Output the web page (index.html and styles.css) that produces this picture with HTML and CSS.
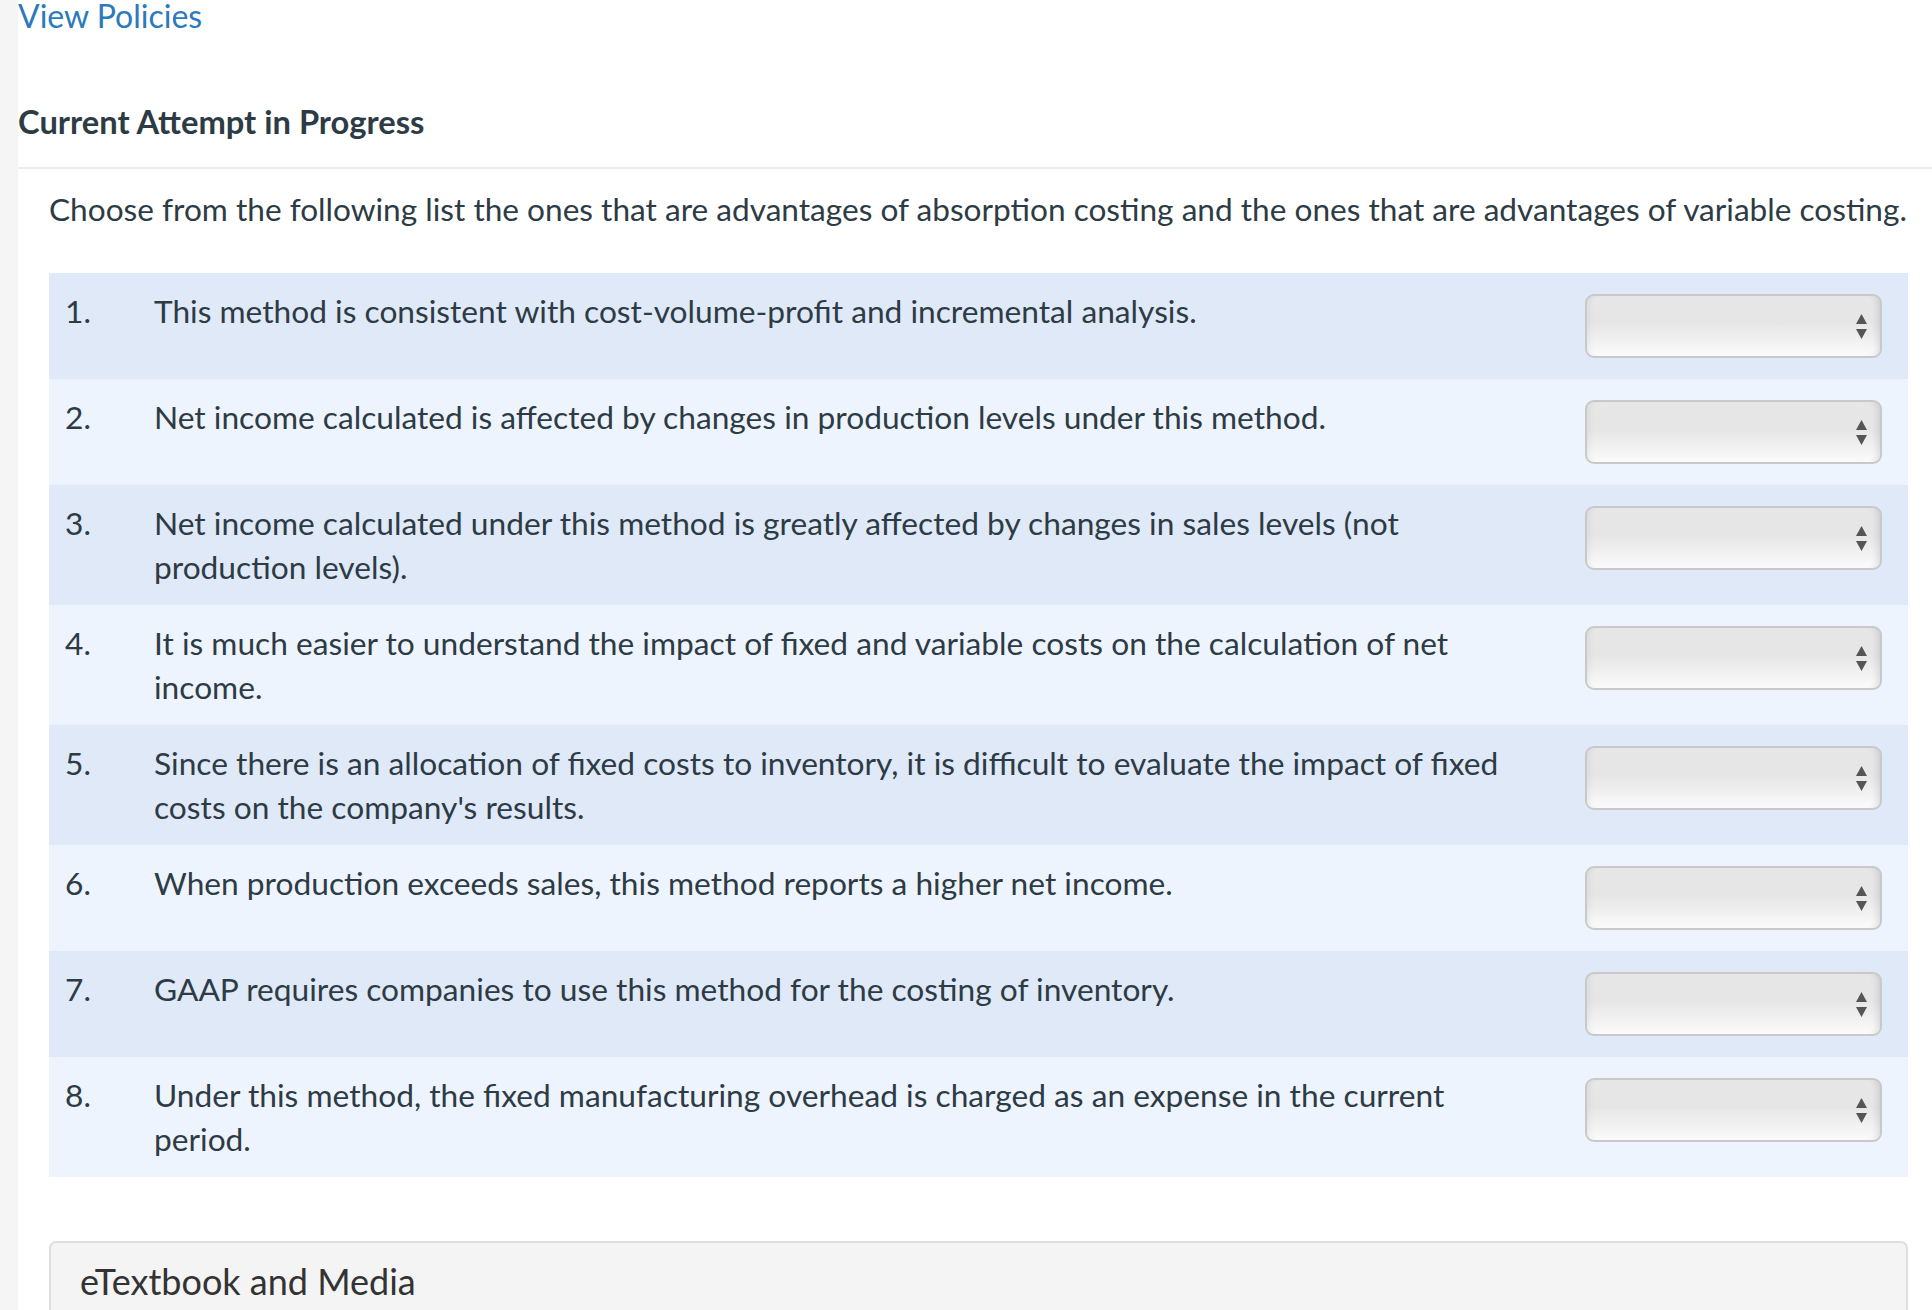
FILE: index.html
```html
<!DOCTYPE html>
<html lang="en">
<head>
<meta charset="utf-8">
<title>Current Attempt in Progress</title>
<link rel="stylesheet" href="styles.css">
</head>
<body>
<div class="page">
  <div class="strip"></div>
  <main class="main">
    <a class="view-link" href="#">View Policies</a>
    <h2 class="attempt-title">Current Attempt in Progress</h2>
    <section class="question">
      <p class="prompt">Choose from the following list the ones that are advantages of absorption costing and the ones that are advantages of variable costing.</p>
      <div class="items">
        <div class="item odd">
          <div class="num">1.</div>
          <div class="text">This method is consistent with cost-volume-profit and incremental analysis.</div>
          <div class="pick"><div class="select"><svg class="arrows" width="11" height="25" viewBox="0 0 11 25"><path d="M5.5 0 L11 10 L0 10 Z M0 15 L11 15 L5.5 25 Z" fill="#555"/></svg></div></div>
        </div>
        <div class="item even">
          <div class="num">2.</div>
          <div class="text">Net income calculated is affected by changes in production levels under this method.</div>
          <div class="pick"><div class="select"><svg class="arrows" width="11" height="25" viewBox="0 0 11 25"><path d="M5.5 0 L11 10 L0 10 Z M0 15 L11 15 L5.5 25 Z" fill="#555"/></svg></div></div>
        </div>
        <div class="item odd">
          <div class="num">3.</div>
          <div class="text">Net income calculated under this method is greatly affected by changes in sales levels (not production levels).</div>
          <div class="pick"><div class="select"><svg class="arrows" width="11" height="25" viewBox="0 0 11 25"><path d="M5.5 0 L11 10 L0 10 Z M0 15 L11 15 L5.5 25 Z" fill="#555"/></svg></div></div>
        </div>
        <div class="item even">
          <div class="num">4.</div>
          <div class="text">It is much easier to understand the impact of fixed and variable costs on the calculation of net income.</div>
          <div class="pick"><div class="select"><svg class="arrows" width="11" height="25" viewBox="0 0 11 25"><path d="M5.5 0 L11 10 L0 10 Z M0 15 L11 15 L5.5 25 Z" fill="#555"/></svg></div></div>
        </div>
        <div class="item odd">
          <div class="num">5.</div>
          <div class="text">Since there is an allocation of fixed costs to inventory, it is difficult to evaluate the impact of fixed costs on the company's results.</div>
          <div class="pick"><div class="select"><svg class="arrows" width="11" height="25" viewBox="0 0 11 25"><path d="M5.5 0 L11 10 L0 10 Z M0 15 L11 15 L5.5 25 Z" fill="#555"/></svg></div></div>
        </div>
        <div class="item even">
          <div class="num">6.</div>
          <div class="text">When production exceeds sales, this method reports a higher net income.</div>
          <div class="pick"><div class="select"><svg class="arrows" width="11" height="25" viewBox="0 0 11 25"><path d="M5.5 0 L11 10 L0 10 Z M0 15 L11 15 L5.5 25 Z" fill="#555"/></svg></div></div>
        </div>
        <div class="item odd">
          <div class="num">7.</div>
          <div class="text">GAAP requires companies to use this method for the costing of inventory.</div>
          <div class="pick"><div class="select"><svg class="arrows" width="11" height="25" viewBox="0 0 11 25"><path d="M5.5 0 L11 10 L0 10 Z M0 15 L11 15 L5.5 25 Z" fill="#555"/></svg></div></div>
        </div>
        <div class="item even">
          <div class="num">8.</div>
          <div class="text">Under this method, the fixed manufacturing overhead is charged as an expense in the current period.</div>
          <div class="pick"><div class="select"><svg class="arrows" width="11" height="25" viewBox="0 0 11 25"><path d="M5.5 0 L11 10 L0 10 Z M0 15 L11 15 L5.5 25 Z" fill="#555"/></svg></div></div>
        </div>
      </div>
      <div class="media-box">
        <div class="media-title">eTextbook and Media</div>
      </div>
    </section>
  </main>
</div>
</body>
</html>
```

FILE: styles.css
```css
html, body {
  margin: 0;
  padding: 0;
  background: #ffffff;
  height: 1310px;
  overflow: hidden;
}
body {
  font-family: Lato, "Open Sans", sans-serif;
  color: #2d3b45;
}
.page {
  display: flex;
  height: 1310px;
}
.strip {
  width: 18px;
  flex: none;
  background: #f5f5f5;
}
.main {
  flex: 1;
  display: flex;
  flex-direction: column;
  min-width: 0;
}
.view-link {
  display: block;
  font-size: 32px;
  line-height: 32px;
  color: #2b7abc;
  text-decoration: none;
  align-self: flex-start;
}
.attempt-title {
  margin: 68px 0 0 0;
  font-size: 32.7px;
  line-height: 44px;
  font-weight: 700;
  color: #2d3b45;
  padding-bottom: 22.5px;
  border-bottom: 2px solid #ececec;
}
.question {
  padding: 0 24px 0 31px;
}
.prompt {
  margin: 18.5px 0 42px 0;
  font-size: 31.6px;
  line-height: 44px;
  white-space: nowrap;
}
.items {
  display: flex;
  flex-direction: column;
}
.item {
  display: grid;
  grid-template-columns: 105px 1fr 388px;
  font-size: 31.7px;
  line-height: 44px;
}
.item.odd { background: #dfe9f7; }
.item.even { background: #eef4fd; }
.num {
  padding: 16px 0 16px 16px;
}
.text {
  padding: 16px 0;
}
.pick {
  padding: 21px 26px 21px 0;
  display: flex;
  justify-content: flex-end;
  align-items: flex-start;
}
.select {
  box-sizing: border-box;
  width: 297px;
  height: 64px;
  border: 2px solid #c9c9c9;
  border-radius: 9px;
  background: linear-gradient(to bottom, #e7e7e7 0%, #e6e6e6 45%, #efefef 70%, #fbfbfb 100%);
  box-shadow: inset -7px 0 7px -5px rgba(0,0,0,0.12), inset 7px 0 7px -5px rgba(0,0,0,0.06);
  display: flex;
  align-items: center;
  justify-content: flex-end;
  padding-right: 13px;
}
.arrows {
  display: block;
}
.media-box {
  margin-top: 64px;
  background: #f4f4f4;
  border: 2px solid #dedede;
  border-bottom: none;
  border-radius: 7px 7px 0 0;
  height: 120px;
  padding: 0 29px;
}
.media-title {
  font-size: 36px;
  line-height: 44px;
  padding-top: 16px;
  color: #333333;
}
```
